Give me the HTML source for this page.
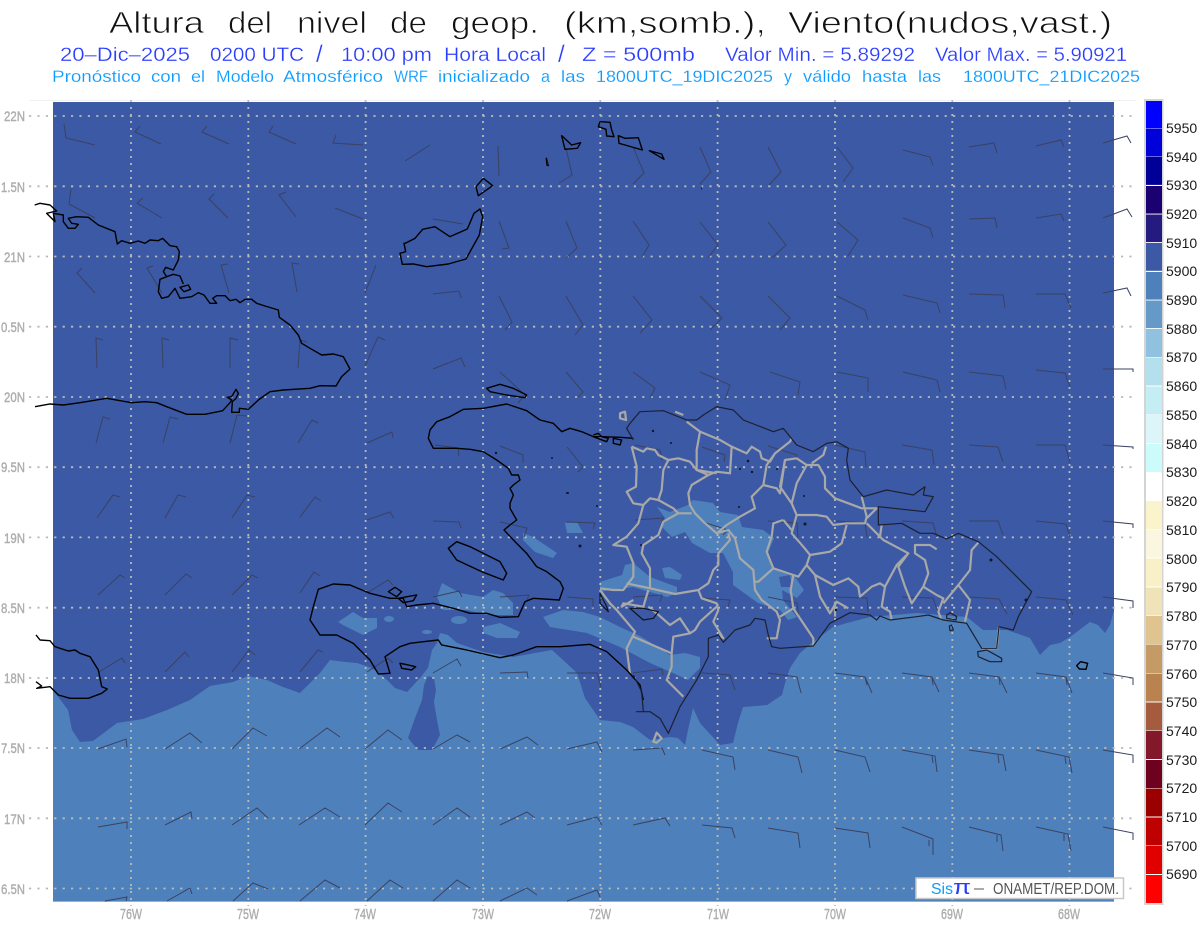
<!DOCTYPE html>
<html><head><meta charset="utf-8"><style>
html,body{margin:0;padding:0;background:#fff}
svg{display:block}
text{font-family:"Liberation Sans",sans-serif;white-space:pre}
.ax{font-size:14px;fill:#adadad;stroke:#adadad;stroke-width:.4}
.axb{font-size:15px;fill:#adadad;stroke:#adadad;stroke-width:.4}
.lg{font-size:14px;fill:#1c1c1c}
.coast,.prov,.thin{fill:none;stroke-linejoin:round;vector-effect:non-scaling-stroke}
.coast path,.thin path,.prov path{vector-effect:non-scaling-stroke}
.coast{stroke:#000;stroke-width:1.4}
.thin{stroke:#1c2030;stroke-width:1.2}
.prov{stroke:#a8a8a8;stroke-width:2.2}
.t1{font-size:31px;fill:#111;stroke:#fff;stroke-width:.8}
.t2{font-size:19px;fill:#2a3cff;stroke:#fff;stroke-width:.25}
.t3{font-size:17px;fill:#0a9bff;stroke:#fff;stroke-width:.15}
</style></head><body>
<svg width="1200" height="927" viewBox="0 0 1200 927" xmlns="http://www.w3.org/2000/svg">
<rect width="1200" height="927" fill="#fff"/>

<g class="t1">
<text x="109" y="33" textLength="95" lengthAdjust="spacingAndGlyphs">Altura</text>
<text x="228" y="33" textLength="44" lengthAdjust="spacingAndGlyphs">del</text>
<text x="297" y="33" textLength="70" lengthAdjust="spacingAndGlyphs">nivel</text>
<text x="390" y="33" textLength="37" lengthAdjust="spacingAndGlyphs">de</text>
<text x="451" y="33" textLength="88" lengthAdjust="spacingAndGlyphs">geop.</text>
<text x="564" y="33" textLength="202" lengthAdjust="spacingAndGlyphs">(km,somb.),</text>
<text x="788" y="33" textLength="324" lengthAdjust="spacingAndGlyphs">Viento(nudos,vast.)</text>
</g>
<g class="t2">
<text x="60" y="61" textLength="130" lengthAdjust="spacingAndGlyphs">20–Dic–2025</text>
<text x="210" y="61" textLength="94" lengthAdjust="spacingAndGlyphs">0200 UTC</text>
<text x="316" y="62" font-size="24" textLength="11" lengthAdjust="spacing">/</text>
<text x="341" y="61" textLength="91" lengthAdjust="spacingAndGlyphs">10:00 pm</text>
<text x="444" y="61" textLength="102" lengthAdjust="spacingAndGlyphs">Hora Local</text>
<text x="558" y="62" font-size="24" textLength="11" lengthAdjust="spacing">/</text>
<text x="582" y="61" textLength="113" lengthAdjust="spacingAndGlyphs">Z = 500mb</text>
<text x="725" y="61" textLength="190" lengthAdjust="spacingAndGlyphs">Valor Min. = 5.89292</text>
<text x="935" y="61" textLength="192" lengthAdjust="spacingAndGlyphs">Valor Max. = 5.90921</text>
</g>
<g class="t3">
<text x="52" y="82" textLength="89" lengthAdjust="spacingAndGlyphs">Pronóstico</text>
<text x="151" y="82" textLength="30" lengthAdjust="spacingAndGlyphs">con</text>
<text x="191" y="82" textLength="14" lengthAdjust="spacingAndGlyphs">el</text>
<text x="216" y="82" textLength="58" lengthAdjust="spacingAndGlyphs">Modelo</text>
<text x="283" y="82" textLength="100" lengthAdjust="spacingAndGlyphs">Atmosférico</text>
<text x="394" y="82" textLength="34" lengthAdjust="spacingAndGlyphs">WRF</text>
<text x="438" y="82" textLength="92" lengthAdjust="spacingAndGlyphs">inicializado</text>
<text x="541" y="82" textLength="9" lengthAdjust="spacingAndGlyphs">a</text>
<text x="561" y="82" textLength="24" lengthAdjust="spacingAndGlyphs">las</text>
<text x="596" y="82" textLength="177" lengthAdjust="spacingAndGlyphs">1800UTC_19DIC2025</text>
<text x="784" y="82" textLength="8" lengthAdjust="spacingAndGlyphs">y</text>
<text x="803" y="82" textLength="48" lengthAdjust="spacingAndGlyphs">válido</text>
<text x="862" y="82" textLength="45" lengthAdjust="spacingAndGlyphs">hasta</text>
<text x="918" y="82" textLength="23" lengthAdjust="spacingAndGlyphs">las</text>
<text x="963" y="82" textLength="177" lengthAdjust="spacingAndGlyphs">1800UTC_21DIC2025</text>
</g>

<line x1="30" y1="100.5" x2="1136" y2="100.5" stroke="#f0f0f0"/>
<rect x="53" y="102" width="1061" height="799.5" fill="#3b59a4"/>
<rect x="53" y="901" width="1061" height="1" fill="#8fb0d8"/>

<!-- lighter shading -->
<g fill="#4e81bb">
<path d="M53 690L68 710 72 730 80 742 93 741 117 723 143 719 167 710 190 700 210 686 233 682 248 676 267 680 283 687 300 693 320 673 330 660 345 662 357 663 372 668 385 678 395 688 407 692 420 678 428 668 432 650 437 643 440 633 448 635 457 643 483 652 513 657 552 650 563 660 577 673 585 698 600 720 620 722 633 727 650 740 670 737 678 738 685 745 688 730 693 708 700 723 720 745 733 743 738 723 743 707 767 705 782 695 785 683 790 668 800 653 813 642 833 627 847 623 870 617 917 613 967 617 983 630 1007 630 1030 638 1040 655 1050 645 1060 643 1070 637 1090 622 1098 625 1105 633 1110 625 1114 610V901H53Z"/>
<path d="M338 622L353 612 363 618 377 618 377 628 363 635 343 625Z"/>
<ellipse cx="389" cy="619" rx="5" ry="3"/>
<path d="M442 583L460 593 483 597 493 590 503 593 513 603 513 615 487 615 467 610 443 610 437 597Z"/>
<ellipse cx="459" cy="620" rx="8" ry="4"/>
<ellipse cx="427" cy="632" rx="5" ry="2"/>
<path d="M483 627L500 623 520 632 517 638 497 638 483 633Z"/>
<path d="M523 533L533 537 557 553 553 558 535 552 523 540Z"/>
<path d="M565 523L577 522 583 533 567 533Z"/>
<path d="M543 617L563 610 583 612 600 617 620 627 640 636 670 655 685 653 700 657 700 668 688 680 673 673 650 663 620 647 587 633 550 627Z"/>
<path d="M600 582L622 575 625 565 633 563 650 577 677 587 677 593 667 597 633 587 610 590 600 592Z"/>
<path d="M662 568L670 567 682 575 680 580 665 578Z"/>
<path d="M657 507L670 512 688 505 693 500 713 503 720 512 738 515 742 527 763 530 774 538 768 553 775 570 795 577 804 590 797 598 782 590 783 600 797 617 788 620 780 610 758 603 733 585 733 572 723 553 710 553 692 543 685 532 672 537 662 527 665 518Z"/>
</g>
<g fill="#3b59a4">
<path d="M428 676L434 678 436 690 434 702 437 720 440 735 432 750 418 750 408 738 415 718 422 700 424 685Z"/>
<path d="M779 577L790 575 792 587 781 587Z"/>
</g>

<!-- grid dots -->
<g stroke="#b8bbb6" stroke-width="1.8" fill="none">
<path stroke-dasharray="2.2 6.2" d="M29 116H1136M29 186.300H1136M29 256.500H1136M29 326.700H1136M29 397H1136M29 467.200H1136M29 537.400H1136M29 607.700H1136M29 678H1136M29 748H1136M29 818.300H1136M29 888.500H1136"/>
<path stroke-dasharray="2 5" d="M131 100V906M248.300 100V906M365.600 100V906M483 100V906M600.300 100V906M717.600 100V906M835 100V906M952.300 100V906M1069.500 100V906"/>
</g>

<!-- wind barbs -->
<path fill="none" stroke="#3a4263" stroke-width="1" d="
M95 145L66 138 64 124M161 144L135 132 140 126M229 144L202 132 207 126M296 144L269 132 273 126M363 145L333 143 336 135M405 161L430 145M498 146L499 176M566 148L572 175 559 183M633 147L644 173 633 184M700 147L711 172 700 184M768 147L781 172 769 185M837 147L853 168 843 182M903 150L930 157 933 165M969 147L994 143 997 153M1036 146L1061 140 1064 147M1103 143L1127 136 1131 143
M95 218L69 204 71 189M162 218L137 203 143 198M228 218L209 199 214 194M296 217L279 195 286 192M335 208L363 219M433 219L463 224M499 221L509 248 502 249M566 221L577 248 566 258M633 221L649 245 642 257M700 222L718 245 708 258M768 222L786 245 772 258M837 222L858 240 848 256M903 218L930 228 933 238M969 219L995 218 997 228M1036 218L1061 214 1064 221M1103 218L1127 209 1132 217
M95 293L77 273 82 268M162 293L147 268 153 266M229 293L221 265 228 264M297 292L292 263 299 264M365 293L376 265M433 294L459 291 461 298M499 296L512 322 505 330M566 296L583 325 575 335M633 296L652 320 640 333M700 296L722 318 710 330M768 296L790 318 780 330M837 296L865 310 868 320M903 295L937 303 940 313M969 294L1003 295 1005 308M1036 294L1065 294 1071 308M1103 293L1127 288 1131 296
M97 368L96 338 103 340M163 368L162 338 169 340M230 368L230 338 238 340M298 368L300 340 307 342M365 366L378 337 385 340M433 369L461 358 465 367M500 372L525 395 518 403M566 372L583 392 578 397M633 372L655 388 650 398M700 372L730 385 725 400M770 372L800 382 798 395M837 372L868 378 868 392M903 372L937 380 940 392M969 372L1003 376 1006 389M1036 370L1065 373 1070 387M1103 369L1133 369 1133 372
M96 443L103 417 110 419M163 443L170 417 178 419M230 443L237 415 247 416M298 443L312 420 318 423M367 443L392 432 393 438M435 445L458 448 459 456M500 446L523 455 523 463M567 447L583 467 578 472M635 445L660 450 662 460M702 447L725 455 724 462M768 446L797 455 796 458M835 445L865 452 866 467M902 445L932 450 934 465M969 445L998 447 1003 462M1036 445L1065 445 1070 462M1103 445L1133 447 1133 449
M97 518L113 495 120 497M165 518L178 495 186 497M232 518L247 495 255 497M300 517L315 497 321 501M367 520L390 512 394 518M433 521L459 522 461 528M500 522L527 528 524 537M567 522L595 523 593 529M635 520L663 518 662 523M703 522L728 530 723 535M768 521L797 523 798 538M835 521L865 523 867 537M902 521L933 523 937 537M969 521L998 521 1003 535M1036 521L1066 524 1070 537M1103 521L1133 524 1133 528
M98 595L120 575 125 578M165 595L186 574 192 578M232 595L252 575 258 578M300 593L314 572 320 576M367 593L388 580 393 585M433 597L459 591 462 597M500 597L529 595 527 600M567 597L593 599 593 608M633 597L662 595 660 602M702 598L730 600 728 607M768 597L797 603 799 618M835 597L867 598 868 612M902 597L933 598 938 612M969 597L999 599 1007 614M1036 597L1066 600 1073 615M1103 597L1133 601 1133 608
M99 672L122 658 125 663M165 672L185 652 189 657M232 672L249 650 255 655M300 672L318 650 323 652M367 672L388 658 393 663M433 673L457 659 461 666M500 673L527 672 528 678M567 673L597 673 601 687M633 673L662 669 663 675M702 673L730 675 735 690M768 673L797 677 801 693M835 673L865 677 872 693M865 677L867 685M902 673L932 677 939 692M932 677L933 685M969 673L999 677 1007 693M999 677L1000 685M1036 673L1066 677 1072 693M1066 677L1067 685M1103 673L1133 678 1133 685
M98 749L126 739 127 747M165 749L190 733 202 743M232 749L253 728 267 736M299 749L327 728 340 737M365 749L388 730 402 740M433 749L457 735 470 742M500 749L527 737 538 745M567 749L597 742 602 752M633 750L662 748 665 755M702 750L733 757 735 770M768 750L798 757 802 773M835 750L865 757 870 772M902 750L935 756 937 772M932 756L933 763M969 750L1003 755 1006 771M998 755L999 763M1036 750L1069 757 1072 773M1065 757L1066 764M1103 750L1133 755 1133 763
M98 827L127 822 127 829M165 825L191 812 192 819M232 825L257 808 268 818M299 825L325 808 340 817M365 825L388 803 402 812M433 825L457 808 470 817M500 825L527 812 535 818M567 825L597 817 602 825M633 825L665 818 670 826M702 825L732 828 735 838M768 828L798 833 800 848M835 828L868 833 870 848M902 827L933 839 933 855M929 840L929 846M969 827L1001 835 1003 851M997 835L997 842M1036 827L1068 834 1071 851M1064 834L1064 841M1103 827L1133 833 1133 840
M105 901L127 897 126 901M167 901L190 888 192 894M233 901L253 883 268 889M300 901L325 880 340 888M367 901L390 880 403 888M433 901L457 880 470 888M500 901L527 888 537 895M567 901L597 890 600 897"/>

<!-- provinces (DR) -->
<g transform="translate(600 390) scale(.33333)" class="prov">
<path d="M95 170L110 230 108 290 80 305 100 340 130 345 115 400 80 440 40 465 80 470 100 520 100 560 70 600 40 600 0 595M0 600L30 640 50 660 105 725 80 775 90 850"/>
<path d="M95 170L130 185 140 175 165 180 175 195 205 210 235 205 270 215 290 240 325 255 275 285 265 310 270 345 285 370 310 395 350 430 385 420 405 445 420 505 460 540 465 600 485 630 530 665 540 690 530 745 500 745"/>
<path d="M205 210L190 240 185 300 175 330 220 355 235 370 275 370M130 345L150 325 175 330"/>
<path d="M235 370L190 395 175 435 130 465 125 490 150 535 150 595 80 580M150 595L225 612 295 600 325 580 340 540 355 525 355 490 390 450 385 430"/>
<path d="M295 600L305 625 350 640 355 660 340 695 370 745 355 735M350 650L300 695 285 720 270 730 240 685 210 705 170 670 145 650M145 600L130 650 70 640 65 650 100 630"/>
<path d="M270 730L220 740 215 790 100 740M215 790L215 830 200 870 250 920"/>
<path d="M325 255L350 245 390 250 395 170 360 150 300 125 260 95M300 125L290 180 290 240 350 250"/>
<path d="M395 170L440 190 455 170 480 185 485 205 510 215 525 190 570 155 575 145M525 190L500 225 490 285 455 320 465 355 420 380 380 405 350 430"/>
<path d="M490 285L530 295 540 310 555 210 590 205 620 225 655 225 675 260 675 295 705 325 785 355 830 355 800 385"/>
<path d="M555 210L540 290 575 340 590 375 650 375 680 380 700 405 740 400 795 400 800 380 785 320M620 225L590 280 575 340M635 220L670 195 678 170"/>
<path d="M590 375L575 430 610 470 630 495 690 485 725 460 740 405M550 390L520 400 515 440 500 485 520 535 475 575 465 575M520 535L580 555 595 560 620 525 630 495M550 390L575 420"/>
<path d="M580 555L572 600 580 655 540 680M580 655L610 700 640 745 640 768"/>
<path d="M620 525L645 555 660 620 690 670 710 635 745 655M645 555L700 585 745 565 775 590 780 620 815 590 840 580 855 590 845 650 870 665 875 690"/>
<path d="M800 400L850 450 925 490 890 525 855 590M925 490L895 530 915 590 935 640 970 590 985 550 975 510 945 490 945 465 990 465 1010 478"/>
<path d="M970 590L1010 615 1030 625 1015 665 1025 690M1075 585L1030 640M1075 585L1110 630 1095 695M1075 585L1110 540 1115 480 1135 458M845 405L840 440"/>
<path d="M1145 775L1190 775 1197 710M60 70L75 65 78 90 60 85ZM225 65L250 75M160 1055L170 1028 185 1045 170 1058ZM705 635L705 680"/>
</g>

<!-- Cuba, Inagua, Haiti coastlines -->
<g transform="translate(0 180) scale(.33333)" class="coast">
<path d="M104 75L120 70 150 75 170 93 140 100 165 125 160 100 190 105 190 125 205 145 225 145 235 133 215 130 205 115 230 110 265 112 295 135 345 155 352 192 365 182 390 190 415 183 435 190 450 180 475 182 488 175 510 197 530 200 538 215 535 240 520 270 497 262 490 275 500 290 480 298 475 335 485 355 505 350 525 325 540 355 575 350 595 338 612 345 630 370 650 370 638 355 650 347 675 347 690 362 708 358 720 368 735 358 755 358 770 370 795 378 835 390 838 412 870 435 895 465 905 490 930 505 965 525 1000 522 1030 530 1050 567 1025 590 1008 618 960 617 930 625 850 630 810 635 775 660 745 688 718 685 718 697 695 697 697 665 708 655 715 640 708 628 695 650 682 652 695 660 690 668 668 692 665 693 615 703 560 703 500 680 470 668 435 665 395 668 320 655 240 668 190 675 150 672 105 680"/>
<path d="M500 290L520 283 540 288 550 312M540 322L565 315 572 328 552 335Z"/>
<path d="M108 1365L120 1380 150 1382 165 1400 205 1413 225 1410 240 1420 270 1430 295 1470 305 1520 322 1527 305 1540 265 1555 210 1555 175 1545 150 1520 110 1525 125 1518 108 1505"/>
</g>
<g transform="translate(380 110) scale(.33333)" class="coast">
<path d="M75 400L105 385 128 358 165 350 190 367 210 380 262 357 282 310 300 297 308 320 298 375 258 447 205 462 140 470 100 462 67 463 60 430 77 425 72 400Z"/>
<path d="M288 230L310 205 338 227 295 257ZM545 77L575 105 602 98 592 115 555 118ZM499 145L505 167 501 165ZM660 35L690 37 695 60 702 80 680 78 678 58 655 50ZM715 77L735 85 775 83 787 120 735 105 717 100ZM808 122L845 132 852 148Z"/>
</g>
<g transform="translate(300 380) scale(.33333)" class="coast">
<path d="M560 25L600 13 640 25 680 45 675 53 620 45 570 35Z"/>
<path d="M1000 175L960 172 905 170 880 170 845 155 810 145 785 155 760 130 720 120 680 92 620 72 550 85 490 88 450 110 410 125 390 150 385 175 400 205 470 205 510 208 550 215 590 240 625 265 635 285 655 285 660 300 640 315 630 325 640 345 630 370 630 385 650 420 630 435 612 450 650 490 680 520 710 560 740 575 780 605 790 625 778 660 700 655 675 665 655 710 600 712 560 700 510 700 460 685 400 670 350 675 320 680 310 655 270 655 210 640 150 615 100 612 55 628 40 680 30 720 60 765 110 765 160 790 210 840 235 882 270 880 255 830 300 800 330 790 370 785 415 780 425 795 500 810 600 833 640 825 710 800 780 800 870 793 920 815 980 870 1020 915 1030 960"/>
<path d="M445 505L470 485 510 500 560 525 600 545 620 580 610 600 545 575 470 540ZM265 635L285 622 305 635 290 650ZM295 655L350 645 340 662 310 668ZM300 850L325 855 347 860 335 870 305 865Z"/>
<path d="M880 165L895 160 905 170 925 175 920 185 880 170M940 175L965 180 960 195 940 190Z"/>
</g>
<g transform="translate(600 390) scale(.33333)" class="thin">
<path d="M100 855L125 905 130 965 110 965 150 965 180 985 205 1030 240 950 290 870 325 800 325 745 355 735 370 757 405 720 450 705 465 685 495 690 505 735 515 770 540 775 640 768 690 700 750 668 810 675 830 690 840 678 870 690 950 680 985 675 1030 690 1100 700 1145 775 1190 775 1197 710 1240 720 1255 680 1295 605 1240 550 1190 500 1135 455 1075 430 1040 447 1000 430 960 430 905 400 835 405 835 350 975 365 1000 320 970 315 975 290 940 315 860 300 790 320 750 270 740 210 745 175 710 155 680 160 640 185 590 165 550 115 520 125 430 90 400 60 350 50 310 75 290 90 260 90 190 62 120 65 90 100 80 115 100 150"/>
<path d="M1133 785L1160 780 1205 805 1205 815 1170 815 1135 800ZM1040 675L1050 668 1070 680 1068 690 1040 685ZM1048 708L1055 705 1060 720 1050 722Z"/>
<path d="M0 610L20 650 25 665 0 640ZM90 655L130 655 175 665 160 685 130 690Z" stroke="#101420"/>
</g>
<g transform="translate(1040 500) scale(.33333)" class="coast"><path d="M110 497L122 485 143 490 138 508 118 507Z"/></g>

<!-- inland dots -->
<g fill="#10162c">
<circle cx="653" cy="431" r="1.200"/><circle cx="671" cy="443" r="1"/><circle cx="748" cy="461" r="1.300"/><circle cx="740" cy="469" r="1"/><circle cx="752" cy="472" r="1.200"/><circle cx="777" cy="469" r="1"/><circle cx="804" cy="496" r="1"/><circle cx="739" cy="507" r="1"/><circle cx="805" cy="524" r="1.500"/><circle cx="641" cy="545" r="1"/><circle cx="991" cy="560" r="1.500"/><circle cx="1026" cy="600" r="1.500"/><circle cx="836" cy="610" r="1.200"/><circle cx="568" cy="493" r="1"/><circle cx="580" cy="546" r="1.500"/><circle cx="567" cy="493" r="1"/><circle cx="552" cy="458" r="1"/><circle cx="496" cy="453" r="1.200"/><circle cx="597" cy="506" r="1"/>
<path d="M547 158l2 8-2-1z"/><path d="M701 184l1 6-1-1z"/>
</g>

<!-- axis labels -->
<g class="ax">
<text x="4" y="121" textLength="21" lengthAdjust="spacingAndGlyphs">22N</text>
<text x="1" y="192" textLength="24" lengthAdjust="spacingAndGlyphs">1.5N</text>
<text x="4" y="262" textLength="21" lengthAdjust="spacingAndGlyphs">21N</text>
<text x="1" y="332" textLength="24" lengthAdjust="spacingAndGlyphs">0.5N</text>
<text x="4" y="402" textLength="21" lengthAdjust="spacingAndGlyphs">20N</text>
<text x="1" y="472" textLength="24" lengthAdjust="spacingAndGlyphs">9.5N</text>
<text x="4" y="543" textLength="21" lengthAdjust="spacingAndGlyphs">19N</text>
<text x="1" y="613" textLength="24" lengthAdjust="spacingAndGlyphs">8.5N</text>
<text x="4" y="683" textLength="21" lengthAdjust="spacingAndGlyphs">18N</text>
<text x="1" y="753" textLength="24" lengthAdjust="spacingAndGlyphs">7.5N</text>
<text x="4" y="824" textLength="21" lengthAdjust="spacingAndGlyphs">17N</text>
<text x="1" y="894" textLength="24" lengthAdjust="spacingAndGlyphs">6.5N</text>
</g>
<g class="axb">
<text x="120" y="919" textLength="22" lengthAdjust="spacingAndGlyphs">76W</text>
<text x="237" y="919" textLength="22" lengthAdjust="spacingAndGlyphs">75W</text>
<text x="354" y="919" textLength="22" lengthAdjust="spacingAndGlyphs">74W</text>
<text x="472" y="919" textLength="22" lengthAdjust="spacingAndGlyphs">73W</text>
<text x="589" y="919" textLength="22" lengthAdjust="spacingAndGlyphs">72W</text>
<text x="707" y="919" textLength="22" lengthAdjust="spacingAndGlyphs">71W</text>
<text x="824" y="919" textLength="22" lengthAdjust="spacingAndGlyphs">70W</text>
<text x="941" y="919" textLength="22" lengthAdjust="spacingAndGlyphs">69W</text>
<text x="1058" y="919" textLength="22" lengthAdjust="spacingAndGlyphs">68W</text>
</g>

<!-- legend -->
<rect x="1144" y="99" width="19.500" height="806" fill="#d4d4d4"/>
<rect x="1146" y="101" width="16" height="802" fill="#fff"/>
<g>
<rect x="1146" y="101" width="16" height="27.600" fill="#0000ff"/>
<rect x="1146" y="129" width="16" height="27.600" fill="#0000d8"/>
<rect x="1146" y="157" width="16" height="27.900" fill="#000096"/>
<rect x="1146" y="186" width="16" height="27.600" fill="#1a0070"/>
<rect x="1146" y="214.500" width="16" height="27.600" fill="#241a80"/>
<rect x="1146" y="243" width="16" height="27.800" fill="#3b59a4"/>
<rect x="1146" y="272" width="16" height="27.600" fill="#4e81bb"/>
<rect x="1146" y="300.500" width="16" height="27.600" fill="#6499c8"/>
<rect x="1146" y="329" width="16" height="28" fill="#90c1df"/>
<rect x="1146" y="357.500" width="16" height="28" fill="#b4e0ee"/>
<rect x="1146" y="386.500" width="16" height="28" fill="#c4eef4"/>
<rect x="1146" y="415" width="16" height="28" fill="#dbf5f9"/>
<rect x="1146" y="444" width="16" height="28" fill="#ccfbfc"/>
<rect x="1146" y="501" width="16" height="28" fill="#faf3cb"/>
<rect x="1146" y="529.500" width="16" height="28" fill="#fbf6e0"/>
<rect x="1146" y="558.500" width="16" height="28" fill="#f9f0c8"/>
<rect x="1146" y="587.500" width="16" height="28" fill="#f1e3b8"/>
<rect x="1146" y="616" width="16" height="28" fill="#dfc490"/>
<rect x="1146" y="644.500" width="16" height="28.500" fill="#c59b65"/>
<rect x="1146" y="673.500" width="16" height="28" fill="#b9834f"/>
<rect x="1146" y="702.500" width="16" height="28" fill="#a55b3e"/>
<rect x="1146" y="731" width="16" height="28" fill="#83182a"/>
<rect x="1146" y="760" width="16" height="28" fill="#6e0020"/>
<rect x="1146" y="788.500" width="16" height="28" fill="#9b0000"/>
<rect x="1146" y="817.500" width="16" height="28" fill="#bf0000"/>
<rect x="1146" y="846" width="16" height="28" fill="#e00000"/>
<rect x="1146" y="875" width="16" height="28" fill="#ff0000"/>
</g>
<g class="lg">
<text x="1166" y="133">5950</text><text x="1166" y="162">5940</text><text x="1166" y="190">5930</text><text x="1166" y="219">5920</text><text x="1166" y="248">5910</text><text x="1166" y="276">5900</text><text x="1166" y="305">5890</text><text x="1166" y="334">5880</text><text x="1166" y="362">5870</text><text x="1166" y="391">5860</text><text x="1166" y="420">5850</text><text x="1166" y="449">5840</text><text x="1166" y="477">5830</text><text x="1166" y="506">5820</text><text x="1166" y="535">5810</text><text x="1166" y="564">5800</text><text x="1166" y="592">5790</text><text x="1166" y="621">5780</text><text x="1166" y="650">5770</text><text x="1166" y="679">5760</text><text x="1166" y="707">5750</text><text x="1166" y="736">5740</text><text x="1166" y="765">5730</text><text x="1166" y="793">5720</text><text x="1166" y="822">5710</text><text x="1166" y="851">5700</text><text x="1166" y="879">5690</text>
</g>

<!-- watermark -->
<rect x="916" y="878" width="207.500" height="20.500" fill="#fff" stroke="#c8c8c8" stroke-width="1.500"/>
<text x="931" y="894" font-size="16" fill="#0a9bff" textLength="22" lengthAdjust="spacingAndGlyphs">Sis</text>
<text x="953" y="894" font-size="20" fill="#2a3cff" textLength="18" lengthAdjust="spacingAndGlyphs">π</text>
<text x="974" y="893" font-size="15" fill="#555" textLength="10" lengthAdjust="spacingAndGlyphs">—</text>
<text x="993" y="894" font-size="16" fill="#555" textLength="126" lengthAdjust="spacingAndGlyphs">ONAMET/REP.DOM.</text>
</svg>
</body></html>
